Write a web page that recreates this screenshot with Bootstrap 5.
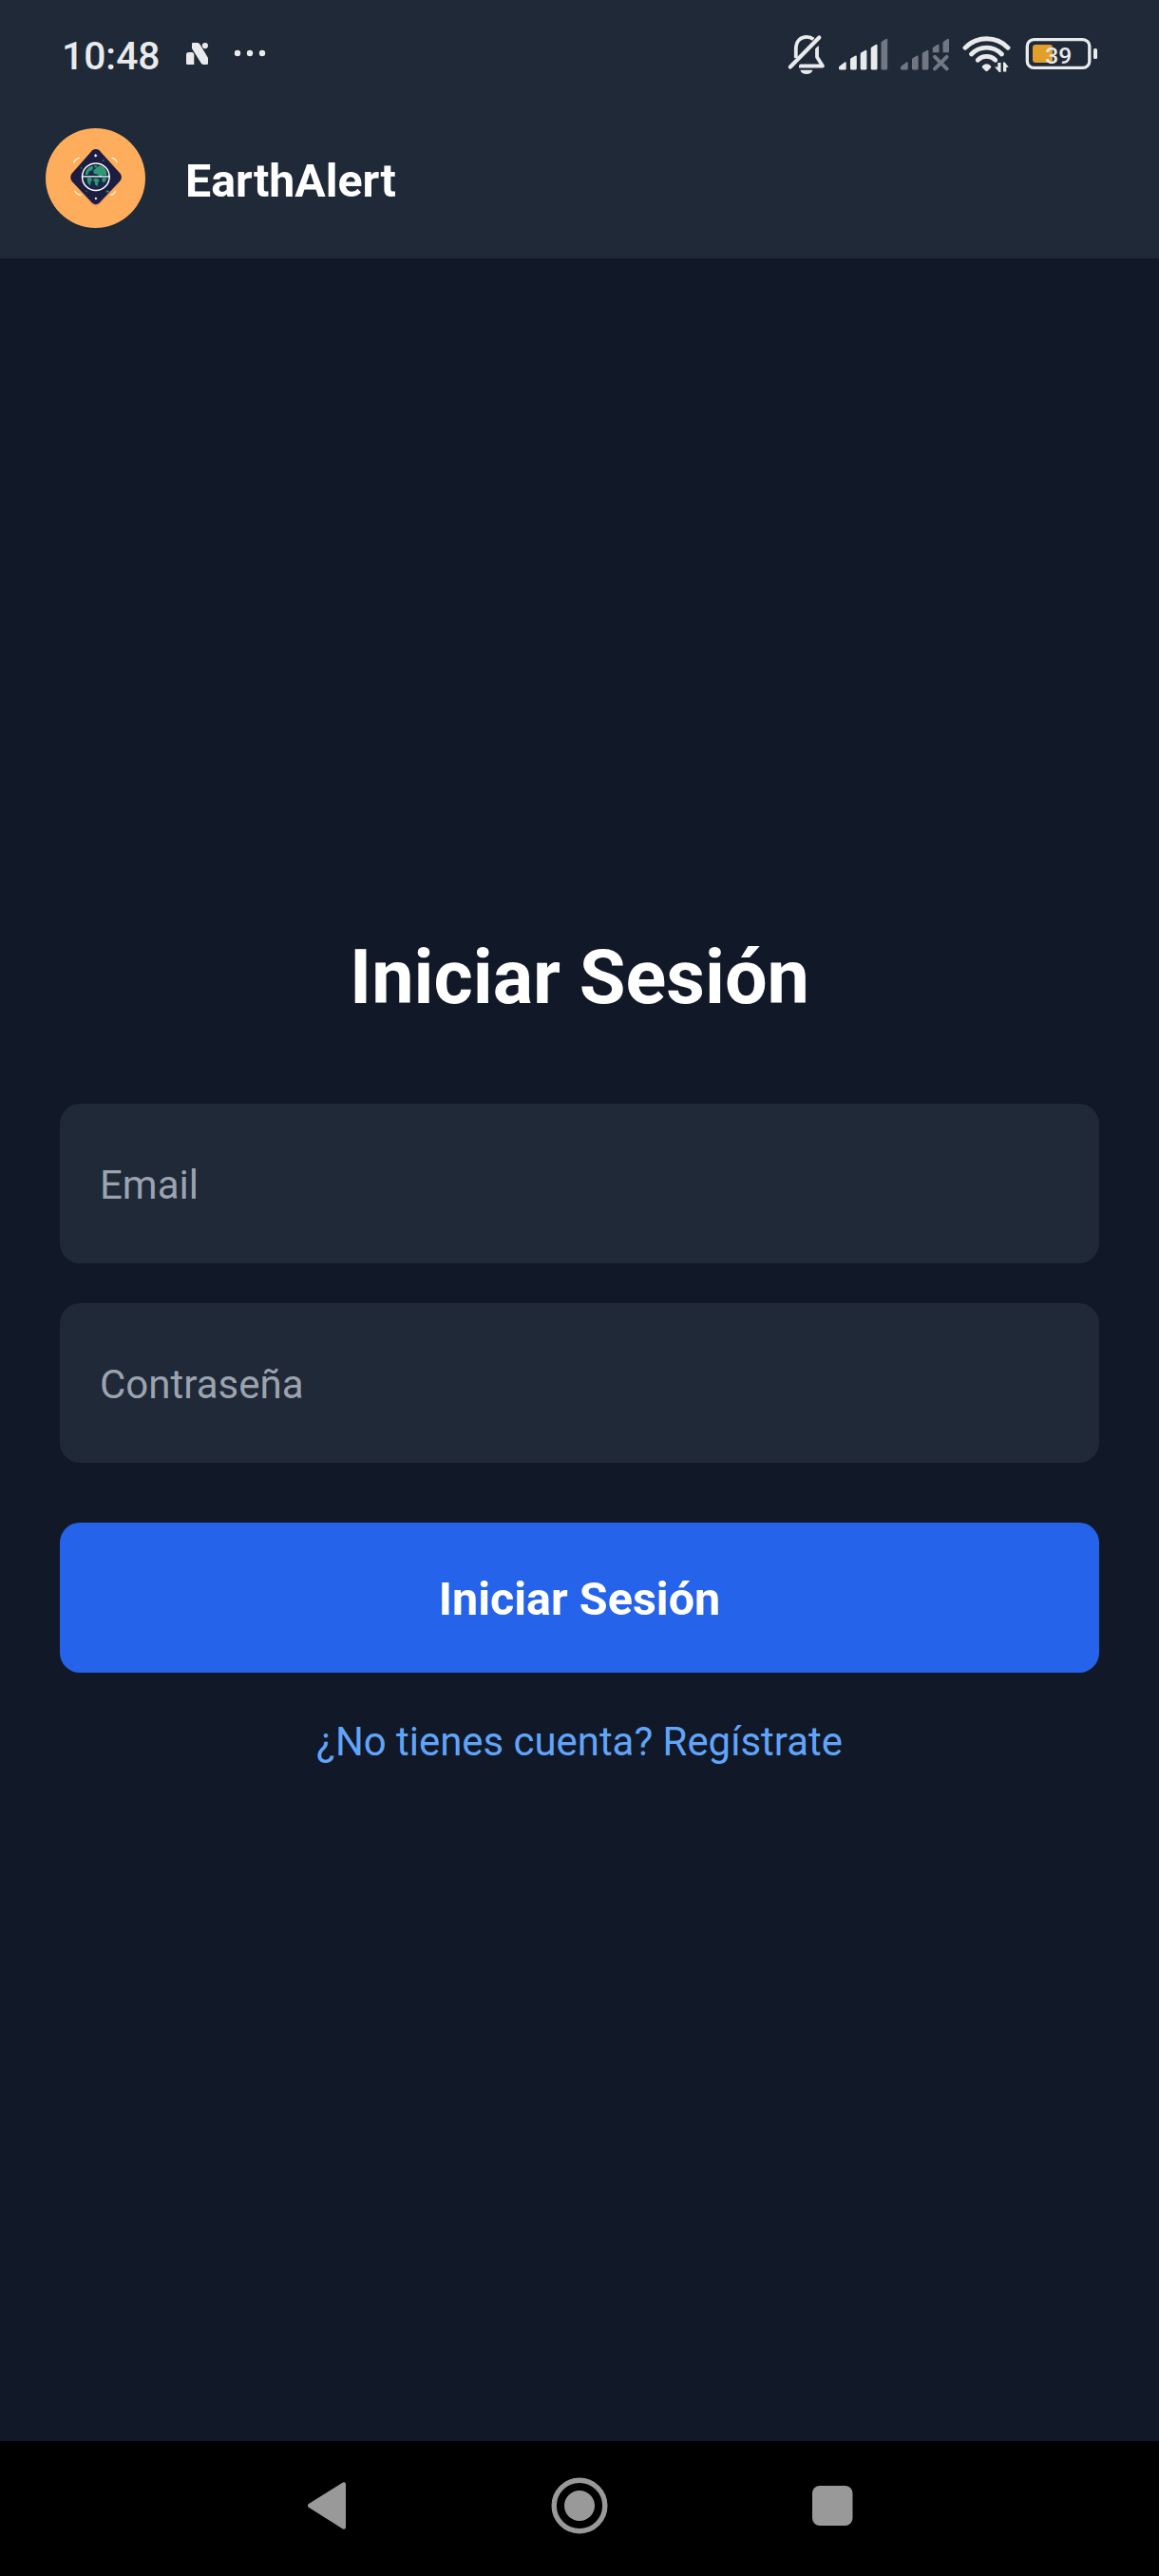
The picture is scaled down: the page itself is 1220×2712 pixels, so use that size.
<!DOCTYPE html>
<html lang="es">
<head>
<meta charset="utf-8">
<meta name="viewport" content="width=device-width, initial-scale=1">
<title>EarthAlert</title>
<link href="https://cdn.jsdelivr.net/npm/bootstrap@5.3.0/dist/css/bootstrap.min.css" rel="stylesheet">
<style>
  body { font-family: Roboto, "Liberation Sans", sans-serif; background: #111827; height: 2712px; overflow: hidden; }
  .topbar { background: #1f2937; height: 272px; }
  .status { height: 103px; padding: 0 63px 0 65px; }
  .status svg { display: block; flex: none; }
  .clock { font-size: 40.8px; font-weight: 500; line-height: 118px; color: #e9eaeb; width: 129px; white-space: nowrap; }
  .brandbar { height: 169px; padding: 0 48px; gap: 42px; }
  .brandname { font-size: 48.3px; line-height: 60px; padding-top: 6px; }
  .title { font-size: 79.2px; line-height: 94px; margin-bottom: 86px; }
  .login { padding: 982px 63px 0; margin-top: -272px; height: 2570px; }
  .field { height: 168px; border-radius: 21px; padding: 3px 42px 0; font-size: 42px; margin-bottom: 42px; background: #1f2937; }
  .field, .field:focus { background: #1f2937; color: #fff; }
  .field::placeholder { color: #9ca3af; opacity: 1; }
  .submit { height: 158px; border-radius: 21px; margin-top: 63px; padding: 5px 0 0; font-size: 48.5px; background: #2563eb; }
  .signup { font-size: 41.9px; line-height: 56px; margin-top: 45px; color: #60a5fa; }
  .navkeys { height: 142px; padding: 0 322px 6px; }
</style>
<script src="https://cdn.jsdelivr.net/npm/bootstrap@5.3.0/dist/js/bootstrap.bundle.min.js"></script>
</head>
<body class="d-flex flex-column">
<header class="topbar flex-shrink-0">
  <div class="status d-flex align-items-start">
    <div class="clock">10:48</div>
    <svg width="88" height="103" viewBox="194 0 88 103" fill="#e9eaeb">
      <path d="M196 57.500q0-2.500 2.500-2.500h3q2.800 0 2.800 3v10h-6.800q-1.500 0-1.500-1.500z"/>
      <path d="M202 46q0-1 1-1h5q1.500 0 2.400 1.500L219 61v5.500q0 1.500-1.500 1.500h-3.500q-1.500 0-2.300-1.400L202 51z"/>
      <circle cx="215.900" cy="48.100" r="3.100"/>
      <circle cx="250" cy="56" r="3.200"/><circle cx="263" cy="56" r="3.200"/><circle cx="276" cy="56" r="3.200"/>
    </svg>
    <svg class="ms-auto" width="50" height="103" viewBox="828 0 50 103">
      <path d="M837.800 61V51.500C837.800 43 843 38.900 849 38.900c2.800 0 5.400.9 7.300 2.500M860 48.500V60l6 9.500h-25" fill="none" stroke="#e9eaeb" stroke-width="3.800" stroke-linejoin="round"/>
      <path d="M837 71L864 43.500" stroke="#1f2937" stroke-width="2.600"/>
      <path d="M831.800 70.500L862.300 39.500" stroke="#e9eaeb" stroke-width="4.200" stroke-linecap="round"/>
      <path d="M842.300 73.700h13.200q-1.600 4.300-6.600 4.300t-6.600-4.300z" fill="#e9eaeb"/>
    </svg>
    <svg width="68" height="103" viewBox="878 0 68 103" fill="#e9eaeb">
      <path d="M884.500 69l5-3.700q1.200-.5 1.200.9v6q0 1.400-1.400 1.400h-4.800q-1.500 0-1.500-1.400v-1.200q0-1.200 1.500-2z"/>
      <path d="M895 62.500q0-1 1-1.500l4.200-2.300q1.600-.6 1.600 1v12.400q0 1.500-1.500 1.500h-3.800q-1.500 0-1.500-1.500z"/>
      <path d="M905.700 57q0-1.200 1-1.800l4-2.300q1.700-.8 1.700 1v18.200q0 1.500-1.500 1.500h-3.700q-1.500 0-1.500-1.500z"/>
      <path d="M916.700 51.200q0-1.200 1-1.800l4.100-2.300q1.700-.8 1.700 1v24q0 1.500-1.500 1.500h-3.800q-1.500 0-1.500-1.500z"/>
      <path d="M927.500 45.200q0-1.200 1-1.800l4-2.300q1.700-.8 1.700 1v30q0 1.500-1.500 1.500h-3.700q-1.500 0-1.500-1.500z" fill="#717884"/>
    </svg>
    <svg width="64" height="103" viewBox="946 0 64 103" fill="#717884">
      <path d="M949.500 69l5-3.700q1.200-.5 1.200.9v6q0 1.400-1.400 1.400h-4.800q-1.500 0-1.500-1.400v-1.200q0-1.200 1.500-2z"/>
      <path d="M960 62.500q0-1 1-1.500l4-2.300q1.600-.6 1.600 1v12.400q0 1.500-1.500 1.500h-3.600q-1.500 0-1.500-1.500z"/>
      <path d="M970.700 57q0-1.200 1-1.800l4-2.300q1.700-.8 1.700 1v18.200q0 1.500-1.500 1.500h-3.700q-1.500 0-1.500-1.500z"/>
      <path d="M981.700 51.200q0-1.200 1-1.800l4.100-2.300q1.700-.8 1.700 1v7.200h-6.800z"/>
      <path d="M992.500 45.200q0-1.200 1-1.800l3.800-2.300q1.700-.8 1.700 1v13.200h-6.500z"/>
      <path d="M984 59.800l12.600 12.600m0-12.600L984 72.400" stroke="#717884" stroke-width="4" stroke-linecap="round"/>
    </svg>
    <svg width="64" height="103" viewBox="1010 0 64 103">
      <g fill="none" stroke="#e9eaeb" stroke-width="4.800" stroke-linecap="round">
        <path d="M1015.900 50.300a31.500 31.500 0 0 1 45.200 0"/>
        <path d="M1022.500 57a22 22 0 0 1 32 0"/>
        <path d="M1029.200 63.200a13.300 13.300 0 0 1 18.600 0"/>
      </g>
      <path d="M1034 69.500q4.500-4.500 9 0 .8 1-.2 2l-3 3q-1.300 1-2.600 0l-3-3q-1-1-.2-2z" fill="#e9eaeb"/>
      <path d="M1047 70.500h3.300V66h3.200v10h-1.700zM1061.800 70.800h-2.500V75.500h-3.300V65.500h1.700z" fill="#e9eaeb"/>
    </svg>
    <svg width="83" height="103" viewBox="1074 0 83 103">
      <rect x="1081.300" y="41.600" width="65.500" height="29.800" rx="7" fill="none" stroke="#e9eaeb" stroke-width="3.300"/>
      <rect x="1087" y="47" width="21" height="19" rx="3" fill="#e39f2b"/>
      <rect x="1151" y="51" width="4" height="11" rx="1.500" fill="#e9eaeb"/>
      <text x="1100.300" y="66.500" font-family="Roboto, sans-serif" font-size="24.600" font-weight="500" fill="#e9eaeb">39</text>
    </svg>
  </div>
  <div class="brandbar d-flex align-items-center">
    <svg width="105" height="105" viewBox="53 44 316 316" aria-label="Logo">
      <circle cx="211" cy="202" r="158" fill="#fdad5c"/>
      <path d="M201 119q11-10 22 0l66 69q10 12 0 24l-66 74q-11 9-22 0l-63-74q-10-12 0-24z" fill="#f3985c"/>
      <path d="M201 114q11-8 22 0l66 73q9 12 0 24l-66 70q-11 9-22 0l-65-69q-8-12 0-24z" fill="#1d1d42"/>
      <g fill="none" stroke="#fff4dc" stroke-width="4"><path d="M142 154q5-14 18-16M262 138q13 2 17 14M145 242q6 12 21 14M258 256q14-3 17-14"/></g>
      <circle cx="212" cy="197" r="38" fill="#162b4c"/>
      <g fill="#309972">
        <path d="M181 179l8-10 10-5 6 5-6 9-8 2-4 11-8 1zM206 162h10v6h-8zM204 178l10-8 10-8 13 5 8 12 2 14h-13l-6 8-11-11-11-2z"/>
        <path d="M184 202l11-2 6 7-5 8-2 11-7-9zM202 207l10-5 12 5-5 9-2 12-7-5-1-10zM233 201h14l-5 12-6 3-5-7z"/>
        <path d="M245 242h9v5h-9zM164 168h4v4h-4zM233 144h5v4h-5zM180 242h4v3h-4z"/>
      </g>
      <circle cx="212" cy="198" r="43" fill="none" stroke="#fff" stroke-width="4.500"/>
      <path d="M167 197h90M207 131h9M211.500 126v9M209 267h7M212 263v7" stroke="#fff" stroke-width="3.500"/>
    </svg>
    <div class="brandname fw-bold text-white">EarthAlert</div>
  </div>
</header>
<main class="login flex-shrink-0 text-center">
  <h1 class="title fw-bold text-white">Iniciar Sesión</h1>
  <form>
    <input class="form-control border-0 field" type="email" placeholder="Email" aria-label="Email">
    <input class="form-control border-0 field" type="password" placeholder="Contraseña" aria-label="Contraseña">
    <button class="btn w-100 border-0 fw-bold text-white d-flex align-items-center justify-content-center submit" type="button">Iniciar Sesión</button>
  </form>
  <a class="signup d-block text-decoration-none" href="#">¿No tienes cuenta? Regístrate</a>
</main>
<nav class="navkeys bg-black d-flex align-items-center justify-content-between flex-shrink-0">
  <svg width="44" height="60" viewBox="322 2608 44 60"><path d="M326 2638.200v-.4L362 2615.500v45.500z" transform="translate(0 -.2)" fill="#999" stroke="#999" stroke-width="4" stroke-linejoin="round"/></svg>
  <svg width="60" height="60" viewBox="580 2608 60 60"><circle cx="610" cy="2638" r="26.800" fill="none" stroke="#999" stroke-width="5.400"/><circle cx="610" cy="2638" r="16" fill="#999"/></svg>
  <svg width="44" height="60" viewBox="854 2608 44 60"><rect x="855" y="2617" width="42.500" height="42" rx="8" fill="#999"/></svg>
</nav>
</body>
</html>
